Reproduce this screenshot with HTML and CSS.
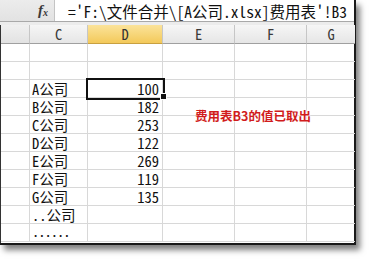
FILE: index.html
```html
<!DOCTYPE html>
<html lang="zh-CN">
<head>
<meta charset="utf-8">
<title>Excel 引用</title>
<link rel="stylesheet" href="styles.css">
</head>
<body>
<div class="sheet">
  <div class="fbar">
    <div class="fx"><span class="fx-f">f</span><span class="fx-x">x</span></div>
    <div class="formula">='F:\文件合并\[A公司.xlsx]费用表'!B3</div>
  </div>
  <div class="gap"></div>
  <div class="grid">
    <div class="hd corner"></div>
    <div class="hd">C</div>
    <div class="hd active">D</div>
    <div class="hd">E</div>
    <div class="hd">F</div>
    <div class="hd last">G</div>

    <div class="c rh"></div><div class="c"></div><div class="c"></div><div class="c"></div><div class="c"></div><div class="c last"></div>
    <div class="c rh"></div><div class="c"></div><div class="c"></div><div class="c"></div><div class="c"></div><div class="c last"></div>
    <div class="c rh"></div><div class="c name">A公司</div><div class="c num sel">100</div><div class="c"></div><div class="c"></div><div class="c last"></div>
    <div class="c rh"></div><div class="c name">B公司</div><div class="c num">182</div><div class="c"></div><div class="c"></div><div class="c last"></div>
    <div class="c rh"></div><div class="c name">C公司</div><div class="c num">253</div><div class="c"></div><div class="c"></div><div class="c last"></div>
    <div class="c rh"></div><div class="c name">D公司</div><div class="c num">122</div><div class="c"></div><div class="c"></div><div class="c last"></div>
    <div class="c rh"></div><div class="c name">E公司</div><div class="c num">269</div><div class="c"></div><div class="c"></div><div class="c last"></div>
    <div class="c rh"></div><div class="c name">F公司</div><div class="c num">119</div><div class="c"></div><div class="c"></div><div class="c last"></div>
    <div class="c rh"></div><div class="c name">G公司</div><div class="c num">135</div><div class="c"></div><div class="c"></div><div class="c last"></div>
    <div class="c rh"></div><div class="c name">..公司</div><div class="c"></div><div class="c"></div><div class="c"></div><div class="c last"></div>
    <div class="c rh"></div><div class="c name dots">......</div><div class="c"></div><div class="c"></div><div class="c"></div><div class="c last"></div>
  </div>
  <div class="note">费用表B3的值已取出</div>
</div>
</body>
</html>
```
FILE: styles.css
```css
html, body {
  margin: 0;
  padding: 0;
  background: #ffffff;
}

body {
  width: 377px;
  height: 266px;
  overflow: hidden;
  font-family: "Noto Sans Mono CJK SC", "Noto Sans CJK SC", "Liberation Mono", monospace;
}

.sheet {
  position: relative;
  width: 354px;
  background: #ffffff;
  border-right: 2px solid #1a1a1a;
  border-bottom: 2px solid #1a1a1a;
  box-shadow: 4px 5px 6px rgba(0, 0, 0, 0.5);
}

.fbar {
  display: flex;
  height: 21px;
  border-bottom: 1px solid #a9a9a9;
}

.fx {
  width: 55px;
  box-sizing: border-box;
  background: linear-gradient(#ececec, #e2e2e2);
  border-right: 1px solid #c4c4c4;
  display: flex;
  justify-content: flex-end;
  align-items: center;
  padding-right: 6px;
  color: #3a3a3a;
  font-family: "Liberation Serif", serif;
  font-style: italic;
  font-weight: bold;
}

.fx-f {
  font-size: 15px;
}

.fx-x {
  font-size: 10px;
  position: relative;
  top: 2px;
}

.formula {
  flex: 1;
  padding-left: 13px;
  padding-top: 1px;
  font-size: 15.5px;
  line-height: 21px;
  color: #111111;
  white-space: nowrap;
  overflow: hidden;
}

.gap {
  height: 3px;
  background: #ececec;
}

.grid {
  display: grid;
  grid-template-columns: 29px 58px 75px 72px 72px 48px;
  grid-auto-rows: 18px;
  grid-template-rows: 19px;
  padding-bottom: 1px;
  border-left: 1px solid #333333;
  margin-left: 0;
}

.hd {
  box-sizing: border-box;
  border-right: 1px solid #c6c6c6;
  border-bottom: 1px solid #a0a0a0;
  background: linear-gradient(#f6f6f6, #e6e6e6);
  color: #3a3a3a;
  font-size: 14.5px;
  line-height: 18px;
  text-align: center;
}

.hd.corner {
  background: linear-gradient(#f0f0f0, #e2e2e2);
}

.hd.active {
  background: linear-gradient(#fbe39a, #f3c95a);
  border-bottom-color: #c8a040;
  color: #333333;
}

.hd.last,
.c.last {
  border-right: none;
}

.c {
  position: relative;
  box-sizing: border-box;
  border-right: 1px solid #d8d8d8;
  border-bottom: 1px solid #d8d8d8;
  font-size: 14.5px;
  line-height: 17px;
  color: #111111;
  white-space: nowrap;
}

.name {
  padding-left: 2px;
}

.dots {
  letter-spacing: -1px;
  line-height: 14px;
}

.num {
  text-align: right;
  padding-right: 3px;
}

.sel {
  outline: 2px solid #111111;
  z-index: 1;
}

.sel::after {
  content: "";
  position: absolute;
  right: -5px;
  bottom: -3px;
  width: 5px;
  height: 5px;
  background: #111111;
  border: 1px solid #ffffff;
}

.note {
  position: absolute;
  left: 195px;
  top: 107px;
  font-family: "Noto Sans CJK SC", sans-serif;
  font-weight: bold;
  font-size: 12.5px;
  line-height: 18px;
  color: #d11c1c;
  text-shadow: 0 0 2px #ffffff, 0 0 2px #ffffff;
  white-space: nowrap;
}
```
